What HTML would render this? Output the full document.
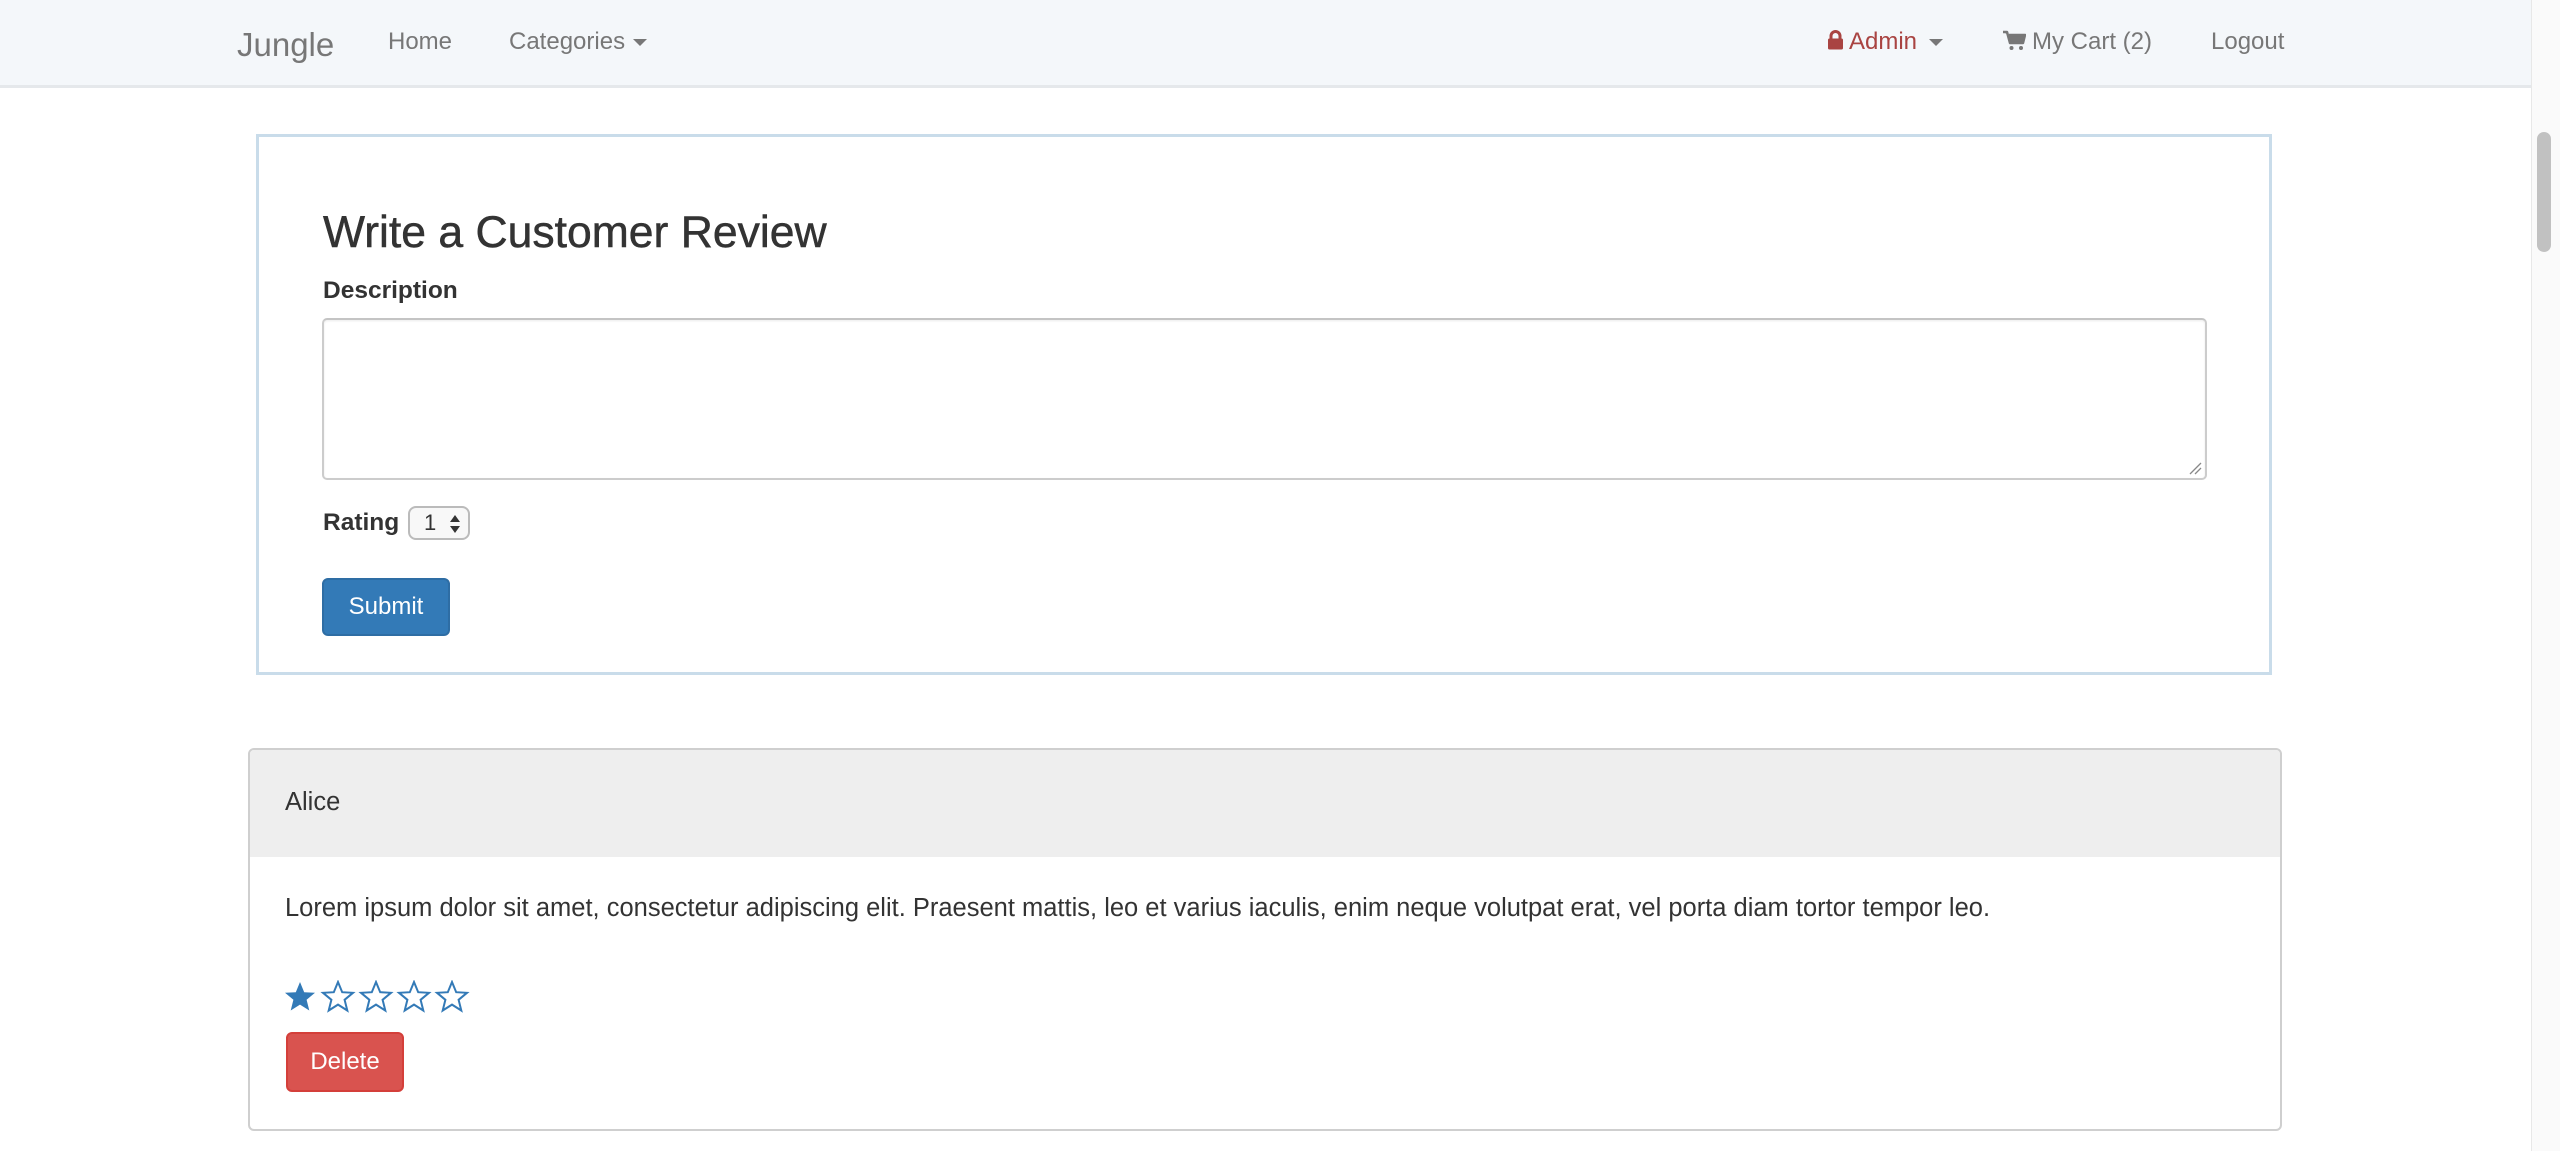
<!DOCTYPE html>
<html><head><style>
*{box-sizing:border-box;margin:0;padding:0}
body{width:2560px;height:1151px;overflow:hidden;background:#fff;font-family:"Liberation Sans",Arial,sans-serif;color:#333;position:relative;font-size:23px}
.a{position:absolute;white-space:nowrap}
.nav{position:absolute;left:0;top:0;width:2531px;height:88px;background:#f4f7fa;border-bottom:3px solid #e5e8eb}
.n{position:absolute;top:27px;font-size:24px;color:#777;line-height:30px}
.caret{display:inline-block;width:0;height:0;border-left:7px solid transparent;border-right:7px solid transparent;border-top:7px solid #777;vertical-align:middle;margin-left:8px}
.sb{position:absolute;left:2531px;top:0;width:29px;height:1151px;background:#fafafa;border-left:1px solid #e8e8e8}
.thumb{position:absolute;left:2537px;top:132px;width:14px;height:120px;border-radius:7px;background:#c1c1c1}
</style></head><body>
<div class="nav"></div>
<div class="n" style="left:237px;top:25px;font-size:33px;line-height:40px">Jungle</div>
<div class="n" style="left:388px">Home</div>
<div class="n" style="left:509px">Categories<span class="caret"></span></div>
<div class="n" style="left:1827px;color:#a94442"><svg width="17" height="20" viewBox="0 0 17 20" style="vertical-align:-1px;margin-right:5px"><path d="M4 9V6a4.5 4.5 0 0 1 9 0v3" fill="none" stroke="#a94442" stroke-width="3"/><rect x="1" y="8.5" width="15" height="11" rx="1.5" fill="#a94442"/></svg>Admin<span class="caret" style="margin-left:12px"></span></div>
<div class="n" style="left:2003px"><svg width="23" height="21" viewBox="0 0 23 21" style="vertical-align:-2px;margin-right:6px"><path d="M0 2h4l3 11h13l2-8H6" fill="#777" stroke="#777" stroke-width="2.5" stroke-linejoin="round"/><circle cx="8.5" cy="18" r="2" fill="#777"/><circle cx="18" cy="18" r="2" fill="#777"/></svg>My Cart (2)</div>
<div class="n" style="left:2211px">Logout</div>

<div class="a" style="left:256px;top:134px;width:2016px;height:541px;border:3px solid #c9dcea"></div>
<div class="a" style="left:323px;top:207px;font-size:44.5px;line-height:52px;color:#333;-webkit-text-stroke:0.5px #333">Write a Customer Review</div>
<div class="a" style="left:323px;top:277px;font-weight:bold;font-size:24.5px;line-height:28px">Description</div>
<div class="a" style="left:322px;top:318px;width:1885px;height:162px;border:2px solid #ccc;border-top-color:#c4c4c4;border-radius:5px;box-shadow:inset 0 1px 2px rgba(0,0,0,.08)"><svg style="position:absolute;right:3px;bottom:3px" width="14" height="14"><path d="M2 13L13 2M7 13L13 7" stroke="#888" stroke-width="1.3"/></svg></div>
<div class="a" style="left:323px;top:509px;font-weight:bold;font-size:24.5px;line-height:28px">Rating</div>
<div class="a" style="left:408px;top:506px;width:62px;height:34px;border:2px solid #bbb;border-radius:8px;background:#f8f8f8;font-size:22px;line-height:30px;padding-left:14px">1<svg style="position:absolute;left:39px;top:6px" width="12" height="20"><path d="M1 8L6 1L11 8Z M1 12L6 19L11 12Z" fill="#333"/></svg></div>
<div class="a" style="left:322px;top:578px;width:128px;height:58px;background:#337ab7;border:2px solid #2e6da4;border-radius:6px;color:#fff;font-size:24px;line-height:54px;text-align:center">Submit</div>

<div class="a" style="left:248px;top:748px;width:2034px;height:383px;border:2px solid #cfcfcf;border-radius:6px;overflow:hidden">
<div style="height:107px;background:#eee;"></div>
</div>
<div class="a" style="left:285px;top:787px;font-size:25.5px;line-height:30px">Alice</div>
<div class="a" style="left:285px;top:893px;font-size:25.5px;line-height:30px">Lorem ipsum dolor sit amet, consectetur adipiscing elit. Praesent mattis, leo et varius iaculis, enim neque volutpat erat, vel porta diam tortor tempor leo.</div>
<div class="a" style="left:284px;top:980px">
<svg width="200" height="36" viewBox="0 0 200 36">
<defs><path id="s" d="M16 2 L20.2 12.2 L31 12.8 L22.6 19.8 L25.3 30.5 L16 24.6 L6.7 30.5 L9.4 19.8 L1 12.8 L11.8 12.2 Z"/></defs>
<use href="#s" fill="#337ab7"/>
<use href="#s" x="38" fill="none" stroke="#337ab7" stroke-width="2"/>
<use href="#s" x="76" fill="none" stroke="#337ab7" stroke-width="2"/>
<use href="#s" x="114" fill="none" stroke="#337ab7" stroke-width="2"/>
<use href="#s" x="152" fill="none" stroke="#337ab7" stroke-width="2"/>
</svg></div>
<div class="a" style="left:286px;top:1032px;width:118px;height:60px;background:#d9534f;border:2px solid #d43f3a;border-radius:6px;color:#fff;font-size:24px;line-height:56px;text-align:center">Delete</div>

<div class="sb"></div><div class="thumb"></div>
</body></html>
